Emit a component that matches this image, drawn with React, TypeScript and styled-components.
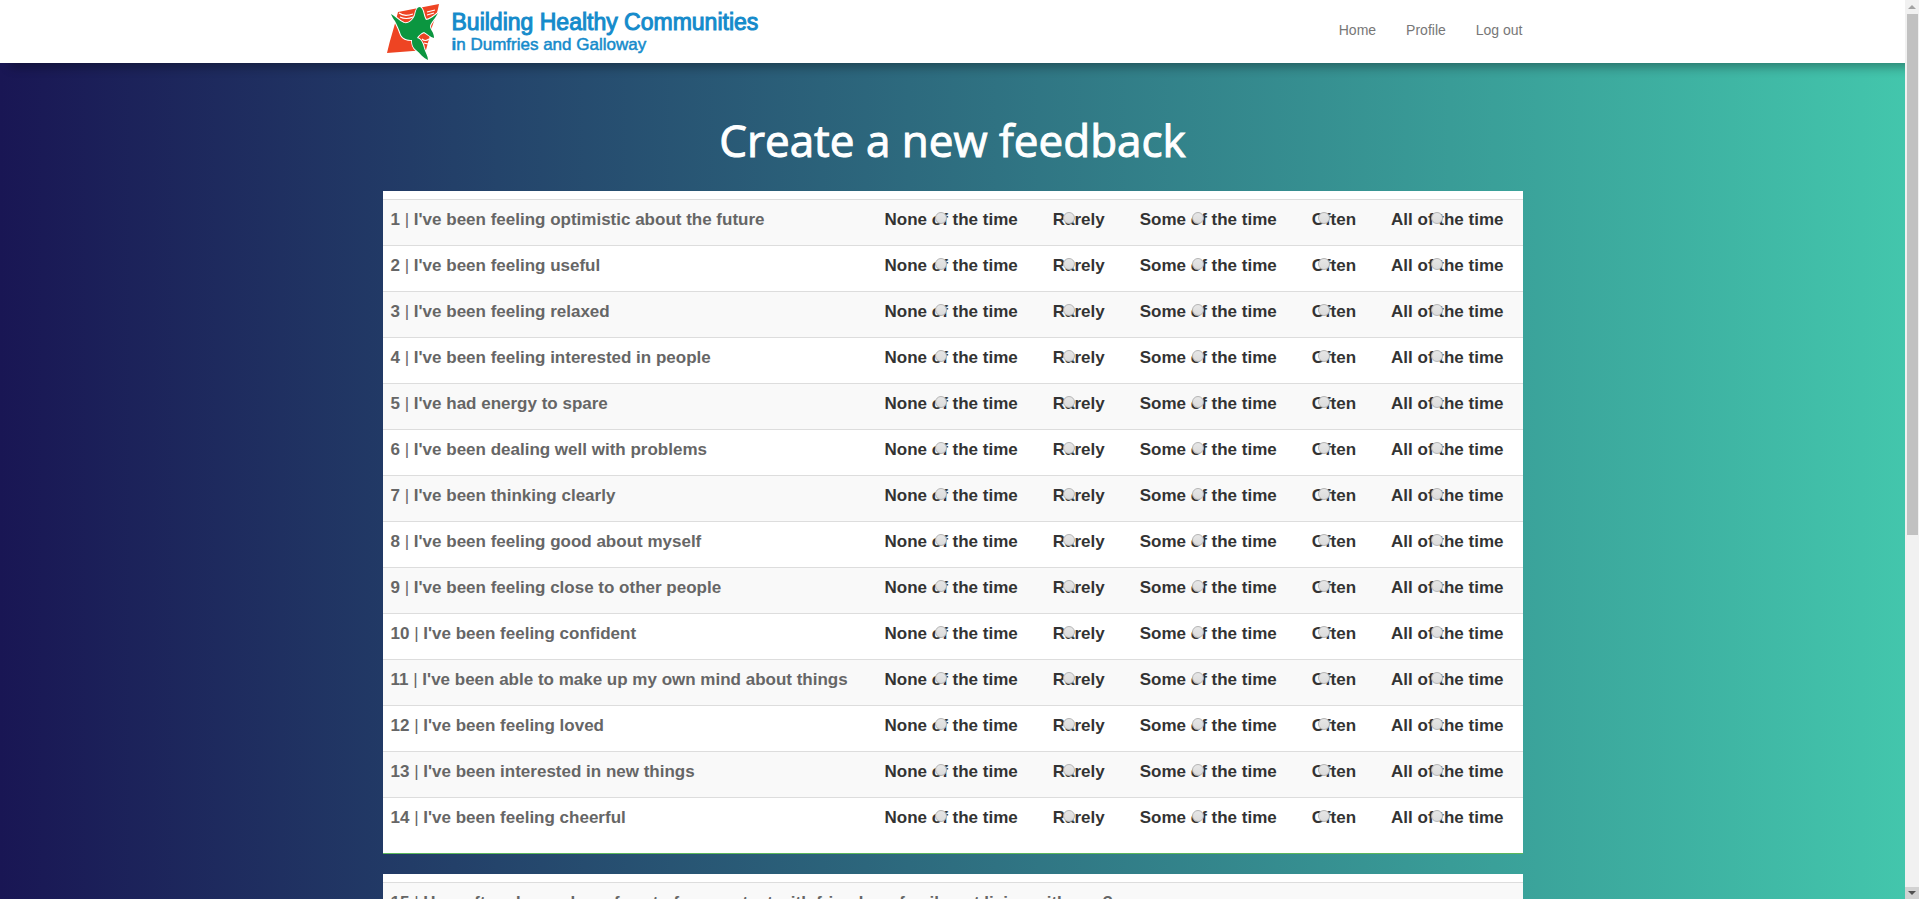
import React from "react";
import styled, { createGlobalStyle } from "styled-components";

const Global = createGlobalStyle`
  *, *::before, *::after { box-sizing: border-box; }
  body {
    margin: 0;
    font-family: "Liberation Sans", Arial, sans-serif;
    font-size: 14px;
    line-height: 20px;
    color: #333;
  }
`;

const Shell = styled.div`
  display: flex;
  height: 100vh;
  overflow: hidden;
`;

const Page = styled.div`
  flex: 1;
  min-width: 0;
  overflow-y: auto;
  scrollbar-width: none;
  background: linear-gradient(to right, #191654, #43c6ac);
`;

const Header = styled.header`
  background: #fff;
  box-shadow: 10px 4px 10px rgba(0, 0, 0, 0.33);
`;

const Container = styled.div`
  width: 100%;
  max-width: 1140px;
  margin: 0 auto;
`;

const HeaderRow = styled(Container)`
  display: flex;
  align-items: center;
  justify-content: space-between;
  height: 63px;
`;

const Brand = styled.a`
  display: flex;
  align-items: center;
  gap: 11px;
  padding-left: 4px;
  color: #158bcb;
  text-decoration: none;
`;

const BrandText = styled.span`
  display: flex;
  flex-direction: column;
  white-space: nowrap;
`;

const BrandName = styled.span`
  font-size: 23px;
  line-height: 26px;
  -webkit-text-stroke: 1px currentColor;
`;

const BrandPlace = styled.span`
  font-size: 17px;
  line-height: 20px;
  -webkit-text-stroke: 0.5px currentColor;
`;

const Nav = styled.nav`
  display: flex;
  gap: 30px;
  padding-bottom: 3px;
`;

const NavLink = styled.a`
  color: #777;
  text-decoration: none;
`;

const Title = styled.h1`
  margin: 0;
  padding: 44px 0 18px;
  color: #fff;
  font-family: "Open Sans", "Noto Sans", sans-serif;
  font-size: 44px;
  font-weight: 500;
  line-height: 66px;
  text-align: center;
  -webkit-text-stroke: 1px currentColor;
`;

const Panel = styled.section`
  margin-bottom: 20px;
  padding: 8px 0 10px;
  border-bottom: 1px solid #5cb85c;
  background: #fff;
`;

const Table = styled.table`
  width: 100%;
  border-collapse: separate;
  border-spacing: 0;
  font-size: 17px;
  line-height: 24px;
`;

const Row = styled.tr`
  &:nth-child(odd) { background: #f9f9f9; }
`;

const Question = styled.td`
  padding: 8px 8px 13px;
  border-top: 1px solid #ddd;
  color: #666;
  white-space: nowrap;
`;

const Choice = styled.td`
  width: 1px;
  padding: 8px 8px 13px 27px;
  border-top: 1px solid #ddd;
  white-space: nowrap;
  &:last-child { padding-right: 19px; }
`;

const ChoiceLabel = styled.label`
  display: block;
  position: relative;
  font-weight: bold;
`;

const Radio = styled.input`
  appearance: none;
  position: absolute;
  top: 4px;
  left: 50%;
  width: 12px;
  height: 12px;
  margin: 0 0 0 -16px;
  border: 1px solid #b4b4b4;
  border-radius: 50%;
  background: linear-gradient(#e6e6e6, #dcdcdc);
  &:checked { box-shadow: inset 0 0 0 3px #ddd; background: #444; }
`;

const ScrollRail = styled.div`
  display: flex;
  flex-direction: column;
  flex: 0 0 14px;
  background: #f1f1f1;
`;

const ScrollArrow = styled.span<{ $active?: boolean }>`
  display: flex;
  align-items: center;
  justify-content: center;
  height: ${(p) => (p.$active ? 12 : 14)}px;
  background: ${(p) => (p.$active ? "#d2d2d2" : "#f1f1f1")};
  color: ${(p) => (p.$active ? "#505050" : "#a3a3a3")};
`;

const ScrollTrack = styled.div`
  flex: 1;
  padding: 0 1px 0 2px;
`;

const ScrollThumb = styled.div`
  height: 59.7%;
  background: #c1c1c1;
`;

const questions = [
  "I've been feeling optimistic about the future",
  "I've been feeling useful",
  "I've been feeling relaxed",
  "I've been feeling interested in people",
  "I've had energy to spare",
  "I've been dealing well with problems",
  "I've been thinking clearly",
  "I've been feeling good about myself",
  "I've been feeling close to other people",
  "I've been feeling confident",
  "I've been able to make up my own mind about things",
  "I've been feeling loved",
  "I've been interested in new things",
  "I've been feeling cheerful",
];

const choices = ["None of the time", "Rarely", "Some of the time", "Often", "All of the time"];

function Logo() {
  return (
    <svg width="54" height="58" viewBox="0 0 54 58" aria-hidden="true">
      <path d="M11 9L52 1C51 8 48 15 45 24C43 32 41 40 39 47L0 50C3 36 8 22 11 9Z" fill="#ee4423" />
      <path
        d="M12 10Q17 14 26 11M13 14Q19 17 26 14M40 9L48 7M40 12L47 10M35 36Q38 39 42 36M37 40L41 41"
        fill="none"
        stroke="#fff"
        strokeWidth="1.2"
      />
      <path
        d="M4 11C8 13 12 18 17 20C22 21 26 17 28 12C29 7 30 4 33 4C37 6 36 12 39 17C42 17 46 14 51 10C48 16 44 19 43 23C43 27 47 29 47 35C43 34 41 31 37 29C34 30 31 33 30 35C34 36 36 40 37 45C38 49 41 53 41 57C36 55 33 50 29 47C25 44 25 40 25 37C21 37 16 36 14 32C12 26 10 22 8 18C6 16 5 13 4 11Z"
        fill="#0b9640"
        stroke="#fff"
        strokeWidth="2"
        paintOrder="stroke"
      />
    </svg>
  );
}

export default function App() {
  return (
    <>
      <Global />
      <Shell>
        <Page>
          <Header>
            <HeaderRow>
              <Brand href="#">
                <Logo />
                <BrandText>
                  <BrandName>Building Healthy Communities</BrandName>
                  <BrandPlace><b>i</b>n Dumfries and Galloway</BrandPlace>
                </BrandText>
              </Brand>
              <Nav>
                <NavLink href="#">Home</NavLink>
                <NavLink href="#">Profile</NavLink>
                <NavLink href="#">Log out</NavLink>
              </Nav>
            </HeaderRow>
          </Header>
          <Container as="main">
            <Title>Create a new feedback</Title>
            <Panel>
              <Table>
                <tbody>
                  {questions.map((text, i) => (
                    <Row key={text}>
                      <Question><b>{i + 1}</b> | <b>{text}</b></Question>
                      {choices.map((choice) => (
                        <Choice key={choice}>
                          <ChoiceLabel>
                            {choice}
                            <Radio type="radio" name={`q${i + 1}`} value={choice} />
                          </ChoiceLabel>
                        </Choice>
                      ))}
                    </Row>
                  ))}
                </tbody>
              </Table>
            </Panel>
            <Panel>
              <Table>
                <tbody>
                  <Row>
                    <Question>
                      <b>15</b> | <b>How often do you have face to face contact with friends or family not living with you?</b>
                    </Question>
                  </Row>
                </tbody>
              </Table>
            </Panel>
          </Container>
        </Page>
        <ScrollRail aria-hidden="true">
          <ScrollArrow>
            <svg width="8" height="4" viewBox="0 0 8 4"><path d="M4 0L8 4H0Z" fill="currentColor" /></svg>
          </ScrollArrow>
          <ScrollTrack><ScrollThumb /></ScrollTrack>
          <ScrollArrow $active>
            <svg width="8" height="4" viewBox="0 0 8 4"><path d="M0 0H8L4 4Z" fill="currentColor" /></svg>
          </ScrollArrow>
        </ScrollRail>
      </Shell>
    </>
  );
}
